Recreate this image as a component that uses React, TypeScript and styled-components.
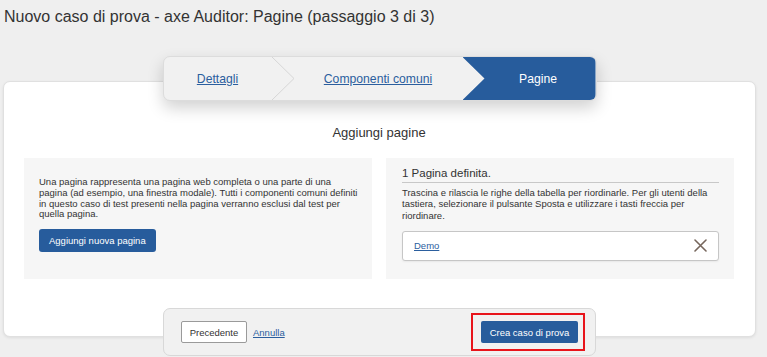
import React from 'react';
import styled, { createGlobalStyle } from 'styled-components';

const BLUE = '#275c9c';
const LINK = '#2b5e9e';

const GlobalStyle = createGlobalStyle`
  html, body {
    margin: 0;
    padding: 0;
    background: #efefef;
    font-family: "Liberation Sans", Arial, sans-serif;
    color: #333333;
  }
  * {
    box-sizing: border-box;
  }
`;

const Page = styled.div`
  width: 767px;
  height: 357px;
  overflow: hidden;
  padding: 0 11px 0 3px;
`;

const Title = styled.h1`
  margin: 0;
  height: 56px;
  padding: 7px 0 0 1px;
  font-size: 16px;
  line-height: 20px;
  font-weight: normal;
  color: #333333;
`;

const StepperRow = styled.div`
  position: relative;
  z-index: 2;
  display: flex;
  justify-content: center;
`;

const Stepper = styled.nav`
  display: flex;
  width: 434px;
  height: 45px;
  background: #f1f1f1;
  border: 1px solid #dcdcdc;
  border-radius: 7px;
  overflow: hidden;
  box-shadow: 0 7px 16px rgba(0, 0, 0, 0.18);
`;

const Step = styled.div<{ $width?: number; $active?: boolean }>`
  display: flex;
  align-items: center;
  justify-content: center;
  flex: ${p => (p.$width ? `0 0 ${p.$width}px` : '1 1 auto')};
  height: 100%;
  font-size: 12.2px;
  background: ${p => (p.$active ? BLUE : 'transparent')};
  color: ${p => (p.$active ? '#ffffff' : LINK)};
  padding-left: ${p => (p.$active ? '18px' : '0')};
  clip-path: ${p =>
    p.$active ? 'polygon(0 0, 100% 0, 100% 100%, 0 100%, 22px 50%)' : 'none'};
`;

const StepLink = styled.a`
  color: ${LINK};
  text-decoration: underline;
  cursor: pointer;
`;

const Separator = styled.svg`
  flex: 0 0 22px;
  height: 100%;
  display: block;
`;

const Chevron = () => (
  <Separator viewBox="0 0 22 43" preserveAspectRatio="none">
    <polyline points="0,0 22,21.5 0,43" fill="none" stroke="#d6d6d6" strokeWidth="1" />
  </Separator>
);

const Card = styled.section`
  margin-top: -20px;
  height: 256px;
  background: #ffffff;
  border: 1px solid #e0e0e0;
  border-radius: 7px;
  box-shadow: 0 1px 3px rgba(0, 0, 0, 0.08);
  padding: 43px 21px 0 20px;
`;

const CardHeading = styled.h2`
  margin: 0 0 17px;
  text-align: center;
  font-size: 13px;
  line-height: 16px;
  font-weight: normal;
  color: #333333;
`;

const Panels = styled.div`
  display: grid;
  grid-template-columns: 1fr 1fr;
  gap: 14px;
`;

const Panel = styled.div<{ $pad: string }>`
  height: 121px;
  background: #f6f6f6;
  padding: ${p => p.$pad};
`;

const Paragraph = styled.p`
  margin: 0;
  font-size: 9.5px;
  line-height: 10.8px;
  color: #333333;
`;

const PrimaryButton = styled.button`
  height: 23px;
  padding: 0 10px;
  border: none;
  border-radius: 3px;
  background: ${BLUE};
  color: #ffffff;
  font-family: inherit;
  font-size: 9.5px;
  cursor: pointer;
`;

const AddButton = styled(PrimaryButton)`
  margin-top: 9px;
`;

const ListHeading = styled.h3`
  margin: 0;
  font-size: 11.5px;
  line-height: 16px;
  font-weight: normal;
  padding: 2px 0 1px;
  border-bottom: 1px solid #c8c8c8;
`;

const ListHint = styled(Paragraph)`
  margin-top: 4px;
  line-height: 11.3px;
`;

const PageRow = styled.div`
  margin-top: 10px;
  height: 30px;
  display: flex;
  align-items: center;
  justify-content: space-between;
  padding: 0 11px;
  background: #ffffff;
  border: 1px solid #c6c6c6;
  border-radius: 3px;
  box-shadow: 0 1px 2px rgba(0, 0, 0, 0.06);
`;

const RowLink = styled.a`
  font-size: 9.5px;
  color: ${LINK};
  text-decoration: underline;
`;

const RemoveIcon = styled.svg`
  width: 13px;
  height: 13px;
  display: block;
`;

const Footer = styled.footer`
  position: relative;
  z-index: 2;
  margin: -29px auto 0;
  width: 433px;
  height: 48px;
  display: flex;
  align-items: center;
  justify-content: space-between;
  padding: 0 10px 0 17px;
  background: #f1f1f1;
  border: 1px solid #d8d8d8;
  border-radius: 7px;
`;

const FooterLeft = styled.div`
  display: flex;
  align-items: center;
  gap: 6px;
`;

const SecondaryButton = styled.button`
  height: 22px;
  width: 66px;
  padding: 0;
  background: #ffffff;
  border: 1px solid #9a9a9a;
  border-radius: 2px;
  font-family: inherit;
  font-size: 9.5px;
  color: #333333;
  cursor: pointer;
`;

const FooterLink = styled.a`
  font-size: 9.5px;
  color: ${LINK};
  text-decoration: underline;
`;

const Highlight = styled.div`
  display: flex;
  border: 2px solid #e8141b;
  padding: 6px 5px 6px 8px;
`;

const CreateButton = styled(PrimaryButton)`
  height: 22px;
  width: 97px;
  padding: 0;
  border-radius: 2px;
`;

const App: React.FC = () => {
  return (
    <>
      <GlobalStyle />
      <Page>
        <Title>Nuovo caso di prova - axe Auditor: Pagine (passaggio 3 di 3)</Title>
        <StepperRow>
          <Stepper>
            <Step $width={108}>
              <StepLink>Dettagli</StepLink>
            </Step>
            <Chevron />
            <Step>
              <StepLink>Componenti comuni</StepLink>
            </Step>
            <Step $width={133} $active>
              Pagine
            </Step>
          </Stepper>
        </StepperRow>
        <Card>
          <CardHeading>Aggiungi pagine</CardHeading>
          <Panels>
            <Panel $pad="19px 10px 0 15px">
              <Paragraph>
                Una pagina rappresenta una pagina web completa o una parte di una pagina (ad
                esempio, una finestra modale). Tutti i componenti comuni definiti in questo caso
                di test presenti nella pagina verranno esclusi dal test per quella pagina.
              </Paragraph>
              <AddButton>Aggiungi nuova pagina</AddButton>
            </Panel>
            <Panel $pad="5px 15px 0 16px">
              <ListHeading>1 Pagina definita.</ListHeading>
              <ListHint>
                Trascina e rilascia le righe della tabella per riordinarle. Per gli utenti della
                tastiera, selezionare il pulsante Sposta e utilizzare i tasti freccia per
                riordinare.
              </ListHint>
              <PageRow>
                <RowLink>Demo</RowLink>
                <RemoveIcon viewBox="0 0 13 13">
                  <path d="M1 1 L12 12 M12 1 L1 12" stroke="#76665c" strokeWidth="1.6" strokeLinecap="round" />
                </RemoveIcon>
              </PageRow>
            </Panel>
          </Panels>
        </Card>
        <Footer>
          <FooterLeft>
            <SecondaryButton>Precedente</SecondaryButton>
            <FooterLink>Annulla</FooterLink>
          </FooterLeft>
          <Highlight>
            <CreateButton>Crea caso di prova</CreateButton>
          </Highlight>
        </Footer>
      </Page>
    </>
  );
};

export default App;
